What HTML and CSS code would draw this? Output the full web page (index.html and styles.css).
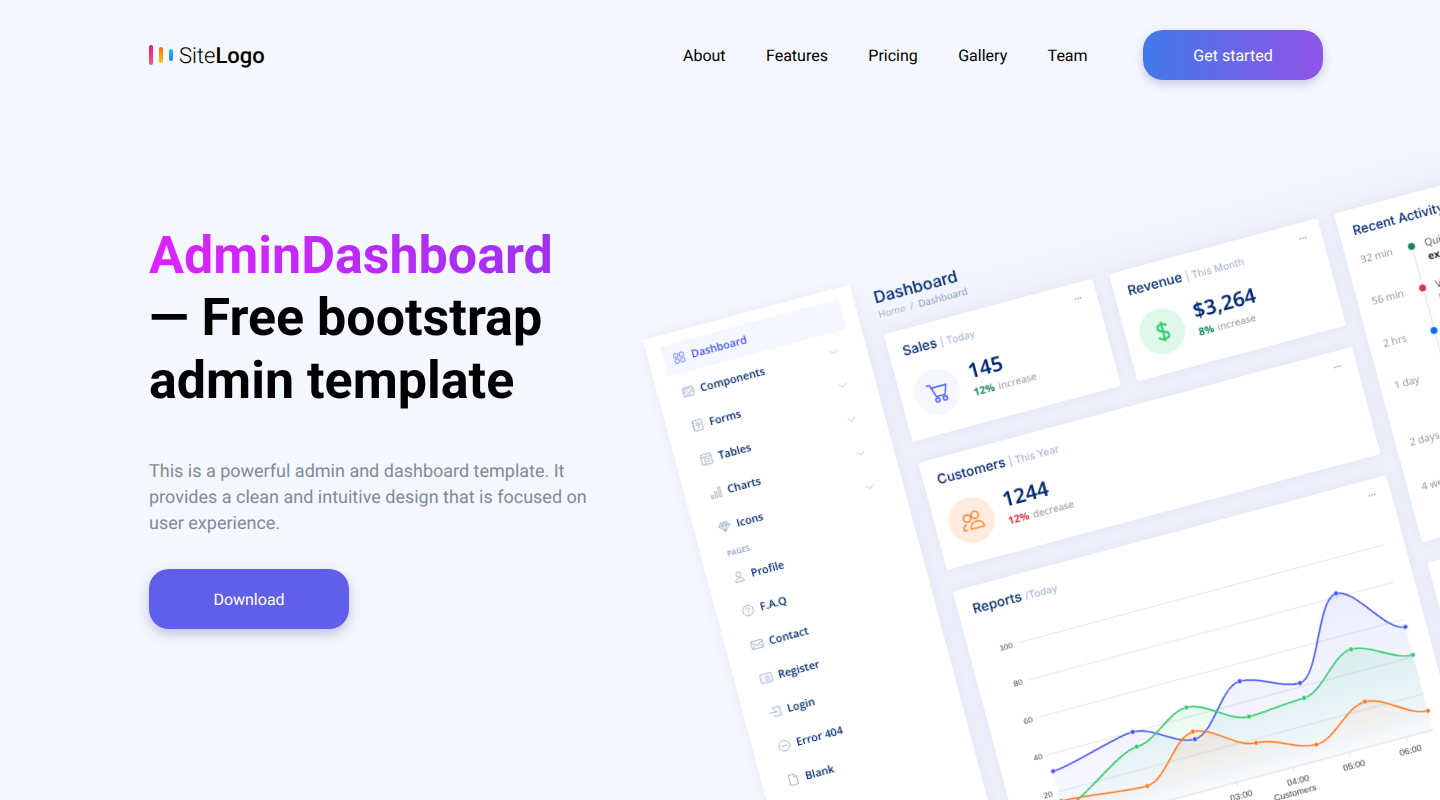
FILE: index.html
```html
<!DOCTYPE html>
<html lang="en">
<head>
    <meta charset="UTF-8">
    <meta name="viewport" content="width=device-width, initial-scale=1.0">
    <title>AdminDashboard - Free bootstrap admin template</title>
    <link rel="stylesheet" href="styles.css">
</head>
<body>
    <header class="site-header">
        <a class="logo" href="#">
            <span class="logo-bars"><i class="bar bar-pink"></i><i class="bar bar-orange"></i><i class="bar bar-blue"></i></span>
            <span class="logo-text">Site<b>Logo</b></span>
        </a>
        <nav class="site-nav">
            <a href="#">About</a>
            <a href="#">Features</a>
            <a href="#">Pricing</a>
            <a href="#">Gallery</a>
            <a href="#">Team</a>
            <a href="#" class="btn-start">Get started</a>
        </nav>
    </header>

    <section class="hero">
        <div class="hero-copy">
            <h1><span class="grad">AdminDashboard</span><br>— Free bootstrap<br>admin template</h1>
            <p>This is a powerful admin and dashboard template. It provides a clean and intuitive design that is focused on user experience.</p>
            <a href="#" class="btn-download">Download</a>
        </div>

        <div class="preview">
            <aside class="side">
                <a class="side-item active"><svg viewBox="0 0 16 16"><rect x="2" y="2" width="5" height="5" rx="1.5"/><rect x="9" y="2" width="5" height="5" rx="1.5"/><rect x="2" y="9" width="5" height="5" rx="1.5"/><rect x="9" y="9" width="5" height="5" rx="1.5"/></svg>Dashboard</a>
                <a class="side-item"><svg viewBox="0 0 16 16"><rect x="1.5" y="2.5" width="13" height="11" rx="1"/><path d="M2 6l5-3.500M2 9l9-6.500M3 13l11-8M7 13l7-5"/></svg>Components<svg class="chev" viewBox="0 0 16 16"><path d="M2 3l6 6 6-6"/></svg></a>
                <a class="side-item"><svg viewBox="0 0 16 16"><rect x="3" y="1.500" width="11" height="13" rx="1"/><path d="M1.500 4h3M1.500 8h3M1.500 12h3M7 5h4v3H7zM7 11h4"/></svg>Forms<svg class="chev" viewBox="0 0 16 16"><path d="M2 3l6 6 6-6"/></svg></a>
                <a class="side-item"><svg viewBox="0 0 16 16"><rect x="1.500" y="1.500" width="13" height="13" rx="1"/><path d="M1.500 5h13M6 5v9.500M8 8h4.500M8 11h4.500"/></svg>Tables<svg class="chev" viewBox="0 0 16 16"><path d="M2 3l6 6 6-6"/></svg></a>
                <a class="side-item"><svg viewBox="0 0 16 16"><path d="M2 10h2.500v4H2zM7 6.500h2.500V14H7zM12 2h2.500v12H12z"/></svg>Charts<svg class="chev" viewBox="0 0 16 16"><path d="M2 3l6 6 6-6"/></svg></a>
                <a class="side-item"><svg viewBox="0 0 16 16"><path d="M4 2.500h8L15 6.500 8 14 1 6.500zM1 6.500h14M5.500 6.500L8 14l2.500-7.500M4 2.500l1.500 4L8 2.500l2.500 4 1.500-4"/></svg>Icons<svg class="chev" viewBox="0 0 16 16"><path d="M2 3l6 6 6-6"/></svg></a>
                <div class="side-heading">PAGES</div>
                <a class="side-item"><svg viewBox="0 0 16 16"><circle cx="8" cy="5" r="3"/><path d="M2.500 14c0-3 2-4.500 5.500-4.500s5.500 1.500 5.500 4.500z"/></svg>Profile</a>
                <a class="side-item"><svg viewBox="0 0 16 16"><circle cx="8" cy="8" r="6.500"/><path d="M6 6.300C6 5 7 4.500 8 4.500s2 .7 2 1.800c0 1.500-2 1.500-2 3.200M8 11.200v.8"/></svg>F.A.Q</a>
                <a class="side-item"><svg viewBox="0 0 16 16"><rect x="1" y="3" width="14" height="10" rx="1"/><path d="M1 4.500l7 5 7-5M1 12.500l5-4.500M15 12.500L10 8"/></svg>Contact</a>
                <a class="side-item"><svg viewBox="0 0 16 16"><rect x="1" y="2.500" width="14" height="11" rx="1"/><path d="M3.500 6h1M6.500 6h6M3.500 8.500h1M6.500 8.500h6M3.500 11h1M6.500 11h6"/></svg>Register</a>
                <a class="side-item"><svg viewBox="0 0 16 16"><path d="M6 4.500V2.500h8.500v11H6v-2M1 8h9M7.500 5.500L10 8l-2.500 2.500"/></svg>Login</a>
                <a class="side-item"><svg viewBox="0 0 16 16"><circle cx="8" cy="8" r="6.500"/><path d="M4.500 8h7"/></svg>Error 404</a>
                <a class="side-item"><svg viewBox="0 0 16 16"><path d="M3 1.500h6.500L13 5v9.500H3zM9.500 1.500V5H13"/></svg>Blank</a>
            </aside>

            <main class="main">
                <div class="page-title">
                    <h2>Dashboard</h2>
                    <div class="crumbs">Home &nbsp;/&nbsp; <span>Dashboard</span></div>
                </div>

                <div class="board">
                    <div class="col-left">
                        <div class="row-two">
                            <div class="card stat">
                                <div class="dots">•••</div>
                                <h3>Sales <small>| Today</small></h3>
                                <div class="stat-body">
                                    <div class="stat-icon icon-sales">
                                        <svg viewBox="0 0 24 24"><path d="M2 4h3.500l4 12h8.500l3-9H6.500"/><circle cx="10" cy="19.500" r="2"/><circle cx="17.500" cy="19.500" r="2"/></svg>
                                    </div>
                                    <div>
                                        <div class="stat-num">145</div>
                                        <div class="stat-sub"><b class="up">12%</b> increase</div>
                                    </div>
                                </div>
                            </div>
                            <div class="card stat">
                                <div class="dots">•••</div>
                                <h3>Revenue <small>| This Month</small></h3>
                                <div class="stat-body">
                                    <div class="stat-icon icon-revenue">
                                        <svg viewBox="0 0 24 24"><path d="M12 2.500v19M16.500 7C15.700 5.400 14 4.800 12 4.800c-2.700 0-4.500 1.400-4.500 3.400 0 4.900 9.500 2.600 9.500 7.700 0 2.100-2.200 3.300-5 3.300-2.300 0-4.300-.8-5.200-2.500"/></svg>
                                    </div>
                                    <div>
                                        <div class="stat-num">$3,264</div>
                                        <div class="stat-sub"><b class="up">8%</b> increase</div>
                                    </div>
                                </div>
                            </div>
                        </div>

                        <div class="card stat">
                            <div class="dots">•••</div>
                            <h3>Customers <small>| This Year</small></h3>
                            <div class="stat-body">
                                <div class="stat-icon icon-customers">
                                    <svg viewBox="0 0 24 24"><circle cx="7.500" cy="9" r="3.500"/><circle cx="15.500" cy="7.500" r="3.500"/><path d="M9 19.500c0-3.500 2.800-6 6.500-6s6.500 2.500 6.500 6c0 .3-.2.500-.5.500H9.500c-.3 0-.5-.2-.5-.5z"/><path d="M6 20H2.500c-.3 0-.5-.2-.5-.5 0-2.500 1.300-4.300 3.500-5"/></svg>
                                </div>
                                <div>
                                    <div class="stat-num">1244</div>
                                    <div class="stat-sub"><b class="down">12%</b> decrease</div>
                                </div>
                            </div>
                        </div>

                        <div class="card reports">
                            <div class="dots">•••</div>
                            <h3>Reports <small>/Today</small></h3>
                            <svg class="chart" viewBox="0 0 449 290">
                                <defs>
                                    <linearGradient id="fill-sales" x1="0" y1="0" x2="0" y2="1"><stop offset="0" stop-color="#4154f1" stop-opacity=".11"/><stop offset="1" stop-color="#4154f1" stop-opacity=".03"/></linearGradient>
                                    <linearGradient id="fill-revenue" x1="0" y1="0" x2="0" y2="1"><stop offset="0" stop-color="#2eca6a" stop-opacity=".12"/><stop offset="1" stop-color="#2eca6a" stop-opacity=".01"/></linearGradient>
                                    <linearGradient id="fill-customers" x1="0" y1="0" x2="0" y2="1"><stop offset="0" stop-color="#ff771d" stop-opacity=".11"/><stop offset="1" stop-color="#ff771d" stop-opacity="0"/></linearGradient>
                                </defs>
                                <g class="grid-lines">
                                    <path d="M50.600 20.500H428.300M50.600 59H428.300M50.600 97.700H428.300M50.600 136.300H428.300M50.600 174.900H428.300"/>
                                    <path class="axis" d="M50.600 212H428.300M225 212v4M283.700 212v4M341.800 212v4M400.300 212v4"/>
                                </g>
                                <g class="y-labels">
                                    <text x="44" y="23.500">100</text>
                                    <text x="44" y="62">80</text>
                                    <text x="44" y="100.700">60</text>
                                    <text x="44" y="139.300">40</text>
                                    <text x="44" y="177.900">20</text>
                                </g>
                                <g class="x-labels">
                                    <text x="226" y="229">03:00</text>
                                    <text x="284.700" y="229">04:00</text>
                                    <text x="342.800" y="229">05:00</text>
                                    <text x="401.300" y="229">06:00</text>
                                </g>
                                <path fill="url(#fill-sales)" d="M50.600 153.700C70.600 153.700 117.600 136.300 137.600 136.300C157.600 136.300 175.800 159.500 195.800 159.500C215.800 159.500 234 115 254 115C274 115 291.800 132.400 311.800 132.400C331.800 132.400 349.800 55.200 369.800 55.200C389.800 55.200 408.200 105.400 428.200 105.400V212H50.600Z"/>
                                <path fill="url(#fill-revenue)" d="M50.600 192.300C70.600 192.300 117.600 151.700 137.600 151.700C157.600 151.700 175.800 126.600 195.800 126.600C215.800 126.600 234 151.700 254 151.700C274 151.700 291.800 147.900 311.800 147.900C331.800 147.900 349.800 113.100 369.800 113.100C389.800 113.100 408.200 134.400 428.200 134.400V212H50.600Z"/>
                                <path fill="url(#fill-customers)" d="M50.600 184.500C70.600 184.500 117.600 192.300 137.600 192.300C157.600 192.300 175.800 151.700 195.800 151.700C215.800 151.700 234 178.800 254 178.800C274 178.800 291.800 196.100 311.800 196.100C331.800 196.100 349.800 167.200 369.800 167.200C389.800 167.200 408.200 192.300 428.200 192.300V212H50.600Z"/>
                                <g class="series" stroke="#4154f1" fill="#4154f1">
                                    <path d="M50.600 153.700C70.600 153.700 117.600 136.300 137.600 136.300C157.600 136.300 175.800 159.500 195.800 159.500C215.800 159.500 234 115 254 115C274 115 291.800 132.400 311.800 132.400C331.800 132.400 349.800 55.200 369.800 55.200C389.800 55.200 408.200 105.400 428.200 105.400"/>
                                    <circle cx="50.600" cy="153.700" r="2.400"/><circle cx="137.600" cy="136.300" r="2.400"/><circle cx="195.800" cy="159.500" r="2.400"/><circle cx="254" cy="115" r="2.400"/><circle cx="311.800" cy="132.400" r="2.400"/><circle cx="369.800" cy="55.200" r="2.400"/><circle cx="428.200" cy="105.400" r="2.400"/>
                                </g>
                                <g class="series" stroke="#2eca6a" fill="#2eca6a">
                                    <path d="M50.600 192.300C70.600 192.300 117.600 151.700 137.600 151.700C157.600 151.700 175.800 126.600 195.800 126.600C215.800 126.600 234 151.700 254 151.700C274 151.700 291.800 147.900 311.800 147.900C331.800 147.900 349.800 113.100 369.800 113.100C389.800 113.100 408.200 134.400 428.200 134.400"/>
                                    <circle cx="137.600" cy="151.700" r="2.400"/><circle cx="195.800" cy="126.600" r="2.400"/><circle cx="254" cy="151.700" r="2.400"/><circle cx="311.800" cy="147.900" r="2.400"/><circle cx="369.800" cy="113.100" r="2.400"/><circle cx="428.200" cy="134.400" r="2.400"/>
                                </g>
                                <g class="series" stroke="#ff771d" fill="#ff771d">
                                    <path d="M50.600 184.500C70.600 184.500 117.600 192.300 137.600 192.300C157.600 192.300 175.800 151.700 195.800 151.700C215.800 151.700 234 178.800 254 178.800C274 178.800 291.800 196.100 311.800 196.100C331.800 196.100 349.800 167.200 369.800 167.200C389.800 167.200 408.200 192.300 428.200 192.300"/>
                                    <circle cx="50.600" cy="184.500" r="2.400"/><circle cx="137.600" cy="192.300" r="2.400"/><circle cx="195.800" cy="151.700" r="2.400"/><circle cx="254" cy="178.800" r="2.400"/><circle cx="311.800" cy="196.100" r="2.400"/><circle cx="369.800" cy="167.200" r="2.400"/><circle cx="428.200" cy="192.300" r="2.400"/>
                                </g>
                                <g class="legend">
                                    <text x="257" y="240">Customers</text>
                                </g>
                            </svg>
                        </div>
                    </div>

                    <div class="col-right">
                        <div class="card activity">
                            <h3>Recent Activity</h3>
                            <ul class="timeline">
                                <li><span class="when">32 min</span><i class="dot dot-green"></i><span class="what">Quia quae rerum <b>explicabo</b> officiis beatae</span></li>
                                <li><span class="when">56 min</span><i class="dot dot-red"></i><span class="what">Voluptatem blanditiis blanditiis eveniet</span></li>
                                <li><span class="when">2 hrs</span><i class="dot dot-blue"></i><span class="what">Voluptates corrupti molestias voluptatem</span></li>
                                <li><span class="when">1 day</span><i class="dot dot-blue"></i><span class="what">Tempore autem saepe occaecati voluptatem tempore</span></li>
                                <li class="tall"><span class="when">2 days</span><i class="dot dot-blue"></i><span class="what">Est sit eum reiciendis exercitationem</span></li>
                                <li><span class="when">4 weeks</span><i class="dot dot-blue"></i><span class="what">Dicta dolorem harum nulla eius</span></li>
                            </ul>
                        </div>
                        <div class="card next-card"></div>
                    </div>
                </div>
            </main>
        </div>
    </section>
</body>
</html>
```

FILE: styles.css
```css
* {
    box-sizing: border-box;
}

html, body {
    height: 100%;
    overflow: hidden;
}

body {
    margin: 0;
    background-color: #f4f7fe;
    color: #000;
    font-family: Roboto, Arial, sans-serif;
    text-rendering: geometricPrecision;
}

a {
    color: inherit;
    text-decoration: none;
}

/* header */
.site-header {
    display: flex;
    align-items: center;
    justify-content: space-between;
    height: 110px;
    padding: 0 117px 0 149px;
}

.logo {
    display: flex;
    align-items: center;
    gap: 6px;
}

.logo-bars {
    display: flex;
    align-items: center;
    gap: 6px;
}

.bar {
    display: block;
    width: 4px;
    border-radius: 2px;
}

.bar-pink {
    height: 20px;
    background: linear-gradient(#e8178f, #f9596d);
}

.bar-orange {
    height: 16px;
    background: linear-gradient(#ec6a2c, #fdc70c);
}

.bar-blue {
    height: 12px;
    background: linear-gradient(#1cc3f5, #1f83e8);
}

.logo-text {
    margin-top: 2px;
    font-size: 22px;
    font-weight: 300;
}

.logo-text b {
    font-weight: 500;
}

.site-nav {
    display: flex;
    align-items: center;
    gap: 40.400px;
    font-size: 16px;
}

.btn-start {
    width: 180px;
    height: 50px;
    margin-left: 15px;
    border-radius: 20px;
    background: linear-gradient(90deg, #4279ea, #8f54e8);
    box-shadow: 0 4px 10px rgba(70, 70, 160, .25);
    color: #fff;
    line-height: 51px;
    text-align: center;
}

/* hero */
.hero {
    display: flex;
    padding: 114px 0 0 149px;
}

.hero-copy {
    flex: none;
    width: 494px;
}

.hero-copy h1 {
    margin: .5px 0 0;
    font-size: 52px;
    font-weight: 700;
    line-height: 62.500px;
}

.grad {
    background: linear-gradient(90deg, #de22ff, #9c33ef);
    -webkit-background-clip: text;
    background-clip: text;
    color: transparent;
}

.hero-copy p {
    width: 445px;
    margin: 46.500px 0 32px;
    color: #808a99;
    font-size: 18px;
    line-height: 26px;
}

.btn-download {
    display: block;
    width: 200px;
    height: 60px;
    border-radius: 20px;
    background-color: #5f5fe9;
    box-shadow: 0 5px 12px rgba(70, 70, 160, .3);
    color: #fff;
    font-size: 16px;
    line-height: 61px;
    text-align: center;
}

/* rotated dashboard picture */
.preview {
    display: flex;
    flex: none;
    width: 1020px;
    height: 760px;
    margin-top: 116px;
    transform: rotate(-15deg);
    transform-origin: 0 0;
    filter: blur(.4px);
    color: #012970;
    font-family: "Open Sans", Arial, sans-serif;
}

.side {
    position: relative;
    z-index: 1;
    display: flex;
    flex: none;
    flex-direction: column;
    gap: 4px;
    width: 214px;
    height: 760px;
    padding: 11px 15px 0;
    background-color: #fff;
    box-shadow: 0 0 16px rgba(1, 41, 112, .05);
}

.side-item {
    display: flex;
    align-items: center;
    height: 31px;
    padding-left: 9px;
    font-size: 10.800px;
    font-weight: 600;
}

.side-heading ~ .side-item {
    padding-left: 10px;
}

.side-item svg {
    flex: none;
    width: 13px;
    height: 13px;
    margin-right: 6px;
    fill: none;
    stroke: #899bbd;
    stroke-width: .9;
}

.side-item svg.chev {
    width: 10px;
    height: 10px;
    margin: 0 13px 0 auto;
}

.side-item.active {
    background-color: #f4f7ff;
    color: #4154f1;
}

.side-item.active svg {
    stroke: #4154f1;
}

.side-heading {
    height: 9px;
    margin: 4px 0 0 11px;
    color: #899bbd;
    font-size: 7.500px;
    font-weight: 600;
    line-height: 9px;
}

.main {
    flex: 1;
    margin-top: 3px;
    padding: 0 0 0 20px;
    background: linear-gradient(#f4f7fe, #f2f5fd 20px, #edf0fb 70px);
}

.page-title {
    height: 54px;
    padding-top: 6px;
}

.page-title h2 {
    margin: 0;
    font-family: Inter, Arial, sans-serif;
    font-size: 16.500px;
    font-weight: 500;
    line-height: 21px;
}

.crumbs {
    margin-top: 1px;
    color: #a0aecb;
    font-size: 9.800px;
    line-height: 12px;
}

.crumbs span {
    color: #7e8fb0;
}

.board {
    display: flex;
    gap: 17px;
}

.col-left {
    display: flex;
    flex: none;
    flex-direction: column;
    gap: 22px;
    width: 449px;
}

.row-two {
    display: flex;
    gap: 17px;
}

.row-two .card {
    flex: 1;
}

.col-right {
    display: flex;
    flex: 1;
    flex-direction: column;
    gap: 21px;
}

.card {
    position: relative;
    border-radius: 3px;
    background-color: #fff;
    box-shadow: 0 0 14px rgba(1, 41, 112, .05);
}

.card h3 {
    margin: 0;
    font-family: Inter, Arial, sans-serif;
    font-size: 13.500px;
    font-weight: 500;
    line-height: 16px;
}

.card h3 small {
    color: #a0aecb;
    font-size: 10.200px;
    font-weight: 400;
}

.dots {
    position: absolute;
    top: 12px;
    right: 15px;
    color: #899bbd;
    font-size: 7px;
    line-height: 10px;
}

.stat {
    height: 111px;
    padding: 14px 14px 0;
}

.stat-body {
    display: flex;
    align-items: center;
    gap: 12px;
    margin-top: 9px;
}

.stat-icon {
    display: flex;
    flex: none;
    align-items: center;
    justify-content: center;
    width: 46px;
    height: 46px;
    margin-top: 6px;
    border-radius: 50%;
}

.stat-icon svg {
    width: 25px;
    height: 25px;
    fill: none;
    stroke-width: 1.300;
}

.icon-sales {
    background-color: #f6f6fe;
}

.icon-sales svg {
    stroke: #4154f1;
}

.icon-revenue {
    background-color: #e0f8e9;
}

.icon-revenue svg {
    stroke: #2eca6a;
    stroke-width: 2;
}

.icon-customers {
    background-color: #ffecdf;
}

.icon-customers svg {
    stroke: #ff771d;
}

.stat-num {
    font-family: "Noto Sans", Arial, sans-serif;
    font-size: 20.500px;
    font-weight: 600;
    line-height: 24px;
}

.stat-sub {
    margin-top: 3px;
    color: #8b8f96;
    font-size: 10px;
    line-height: 13px;
}

.stat-sub b {
    margin-right: 1.500px;
    font-size: 10.500px;
    font-weight: 700;
}

.up {
    color: #198754;
}

.down {
    color: #dc3545;
}

.reports {
    height: 336px;
}

.reports h3 {
    height: 46px;
    padding: 15px 0 0 15px;
}

.chart {
    display: block;
    width: 449px;
    height: 290px;
}

.grid-lines path {
    fill: none;
    stroke: #e7e7e7;
    stroke-width: 1;
}

.grid-lines .axis {
    stroke: #e0e0e0;
}

.y-labels text, .x-labels text, .legend text {
    fill: #373d3f;
    font-family: "Liberation Sans", Arial, sans-serif;
    font-size: 8px;
}

.y-labels text {
    text-anchor: end;
}

.x-labels text {
    font-size: 9px;
    text-anchor: middle;
}

.legend text {
    font-size: 9px;
}

.series path {
    fill: none;
    stroke-width: 1.500;
}

.series circle {
    stroke: #fff;
    stroke-width: .5;
}

.activity {
    height: 340px;
    padding: 14px 14px 0;
}

.activity h3 {
    font-size: 13px;
}

.timeline {
    margin: 14.500px 0 0;
    padding: 0;
    color: #51585e;
    font-size: 10.300px;
    line-height: 14px;
    list-style: none;
}

.timeline li {
    position: relative;
    display: flex;
    height: 43.500px;
}

.timeline li.tall {
    height: 46px;
}

.timeline li:nth-child(4) {
    height: 59px;
}

.timeline li::before {
    content: "";
    position: absolute;
    top: 8px;
    bottom: -8px;
    left: 52px;
    width: 2px;
    background-color: #eceffa;
}

.when {
    flex: none;
    width: 49px;
    color: #8b8f96;
}

.dot {
    z-index: 1;
    flex: none;
    width: 7px;
    height: 7px;
    margin: 3px 10px 0 0;
    border-radius: 50%;
}

.dot-green {
    background-color: #198754;
}

.dot-red {
    background-color: #dc3545;
}

.dot-blue {
    background-color: #0d6efd;
}

.what {
    width: 120px;
}

.what b {
    color: #212529;
}

.next-card {
    height: 200px;
}
```
